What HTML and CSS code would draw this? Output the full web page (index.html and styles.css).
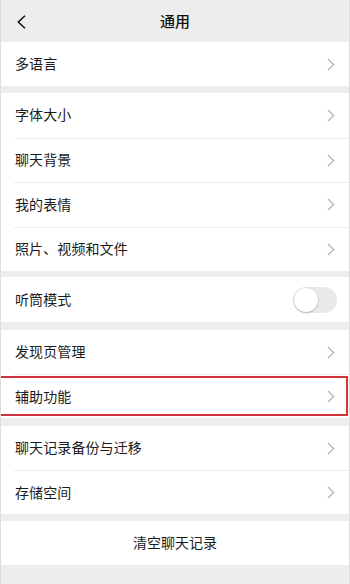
FILE: index.html
```html
<!DOCTYPE html>
<html lang="zh-CN">
<head>
<meta charset="utf-8">
<title>通用</title>
<link rel="stylesheet" href="styles.css">
</head>
<body>
<div class="page">
  <header class="nav">
    <span class="back">
      <svg width="9" height="14" viewBox="0 0 9 14"><polyline points="8,0.8 1.3,7 8,13.2" fill="none" stroke="#111" stroke-width="1.5"/></svg>
    </span>
    <h1 class="title">通用</h1>
  </header>

  <section class="group g1">
    <div class="row"><div class="inner"><span class="label">多语言</span><span class="chev"><svg width="8" height="13" viewBox="0 0 8 13"><polyline points="1,1 6.6,6.5 1,12" fill="none" stroke="#b4b4b4" stroke-width="1.3"/></svg></span></div></div>
  </section>

  <section class="group g2">
    <div class="row"><div class="inner"><span class="label">字体大小</span><span class="chev"><svg width="8" height="13" viewBox="0 0 8 13"><polyline points="1,1 6.6,6.5 1,12" fill="none" stroke="#b4b4b4" stroke-width="1.3"/></svg></span></div></div>
    <div class="row"><div class="inner"><span class="label">聊天背景</span><span class="chev"><svg width="8" height="13" viewBox="0 0 8 13"><polyline points="1,1 6.6,6.5 1,12" fill="none" stroke="#b4b4b4" stroke-width="1.3"/></svg></span></div></div>
    <div class="row"><div class="inner"><span class="label">我的表情</span><span class="chev"><svg width="8" height="13" viewBox="0 0 8 13"><polyline points="1,1 6.6,6.5 1,12" fill="none" stroke="#b4b4b4" stroke-width="1.3"/></svg></span></div></div>
    <div class="row"><div class="inner"><span class="label">照片、视频和文件</span><span class="chev"><svg width="8" height="13" viewBox="0 0 8 13"><polyline points="1,1 6.6,6.5 1,12" fill="none" stroke="#b4b4b4" stroke-width="1.3"/></svg></span></div></div>
  </section>

  <section class="group g3">
    <div class="row tall"><div class="inner"><span class="label">听筒模式</span><span class="switch"><span class="knob"></span></span></div></div>
  </section>

  <section class="group g4">
    <div class="row"><div class="inner"><span class="label">发现页管理</span><span class="chev"><svg width="8" height="13" viewBox="0 0 8 13"><polyline points="1,1 6.6,6.5 1,12" fill="none" stroke="#b4b4b4" stroke-width="1.3"/></svg></span></div></div>
    <div class="row highlighted"><div class="inner"><span class="label">辅助功能</span><span class="chev"><svg width="8" height="13" viewBox="0 0 8 13"><polyline points="1,1 6.6,6.5 1,12" fill="none" stroke="#b4b4b4" stroke-width="1.3"/></svg></span></div><span class="mark"></span></div>
  </section>

  <section class="group g5">
    <div class="row"><div class="inner"><span class="label">聊天记录备份与迁移</span><span class="chev"><svg width="8" height="13" viewBox="0 0 8 13"><polyline points="1,1 6.6,6.5 1,12" fill="none" stroke="#b4b4b4" stroke-width="1.3"/></svg></span></div></div>
    <div class="row"><div class="inner"><span class="label">存储空间</span><span class="chev"><svg width="8" height="13" viewBox="0 0 8 13"><polyline points="1,1 6.6,6.5 1,12" fill="none" stroke="#b4b4b4" stroke-width="1.3"/></svg></span></div></div>
  </section>

  <section class="group g6">
    <div class="button-row">清空聊天记录</div>
  </section>
</div>
</body>
</html>
```

FILE: styles.css
```css
* { box-sizing: border-box; }
html, body { margin: 0; padding: 0; }
body {
  font-family: "Noto Sans CJK SC", "Noto Sans", sans-serif;
  color: #1b1b1b;
}
.page {
  width: 350px;
  height: 584px;
  overflow: hidden;
  background: #ededed;
  border-left: 1px solid #dedede;
  border-right: 1px solid #dedede;
  display: flex;
  flex-direction: column;
}
.nav {
  height: 42px;
  flex: none;
  display: flex;
  align-items: center;
  justify-content: center;
  position: relative;
}
.back {
  position: absolute;
  left: 16px;
  top: 15px;
  display: flex;
}
.title {
  margin: 0;
  font-size: 15px;
  font-weight: 500;
  line-height: 1;
  color: #111;
  padding-bottom: 1px;
}
.group {
  background: #fff;
  flex: none;
}
.g2 { margin-top: 7px; }
.g3 { margin-top: 6px; }
.g4 { margin-top: 8px; }
.g5 { margin-top: 8px; }
.g6 { margin-top: 7px; }
.row {
  padding-left: 13px;
  position: relative;
}
.inner {
  height: 44px;
  display: flex;
  align-items: center;
  justify-content: space-between;
  padding-left: 1px;
  padding-right: 14px;
}
.g2 .inner { height: 44.5px; }
.row.tall .inner { height: 45px; }
.row + .row .inner { border-top: 1px solid #ececec; }
.label {
  font-size: 14px;
  line-height: 1;
  letter-spacing: 0.1px;
  padding-bottom: 2px;
}
.chev { display: flex; }
.switch {
  width: 44px;
  height: 26px;
  border-radius: 13px;
  background: #e9e9e9;
  display: flex;
  align-items: center;
  padding-left: 1px;
  margin-right: -2px;
}
.knob {
  width: 24px;
  height: 24px;
  border-radius: 50%;
  background: #fff;
  box-shadow: 0 1px 2px rgba(0,0,0,0.22), 0 0 0 0.5px rgba(0,0,0,0.06);
}
.mark {
  position: absolute;
  left: -11px;
  right: 1px;
  top: 2px;
  bottom: 2px;
  border: 2px solid #d23239;
  pointer-events: none;
}
.button-row {
  height: 44px;
  display: flex;
  align-items: center;
  justify-content: center;
  font-size: 14px;
  line-height: 1;
  padding-bottom: 2px;
}
```
